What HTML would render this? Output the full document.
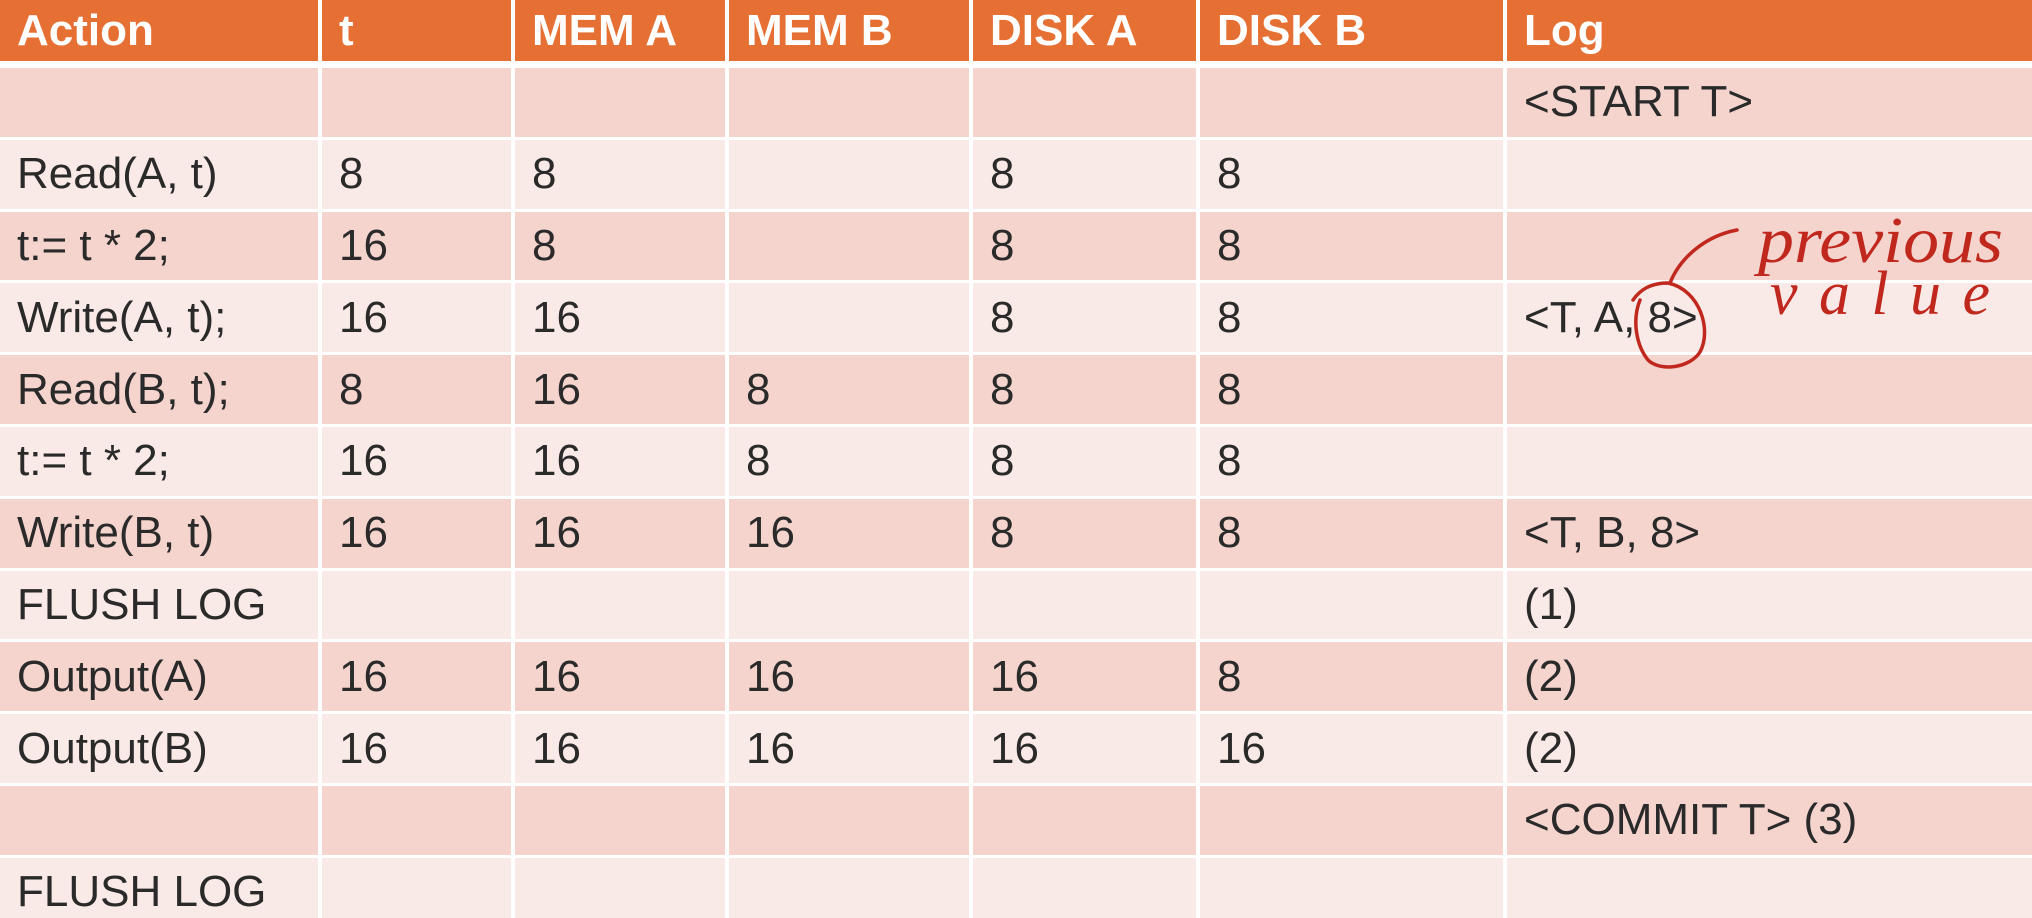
<!DOCTYPE html>
<html><head><meta charset="utf-8"><style>
html,body{margin:0;padding:0;width:2032px;height:918px;overflow:hidden;background:#fff;font-family:"Liberation Sans",Arial,sans-serif;position:relative;}
table{position:absolute;left:0;top:0;border-collapse:separate;border-spacing:0;table-layout:fixed;width:2032px;}
td{padding:0 0 0 17px;font-size:44px;color:#2a2a2a;white-space:nowrap;border-right:4px solid #fff;border-bottom:3.8px solid #fff;box-sizing:border-box;height:71.8px;vertical-align:middle;}
td:last-child{border-right:0;}
tr.h td{color:#fff;font-weight:bold;background:#E66F33;height:68px;border-bottom:7px solid #fff;}
tr.a td{background:#F5D4CE;}
tr.b td{background:#FAEAE7;}
</style></head><body>
<table>
<colgroup><col style="width:322px"><col style="width:193px"><col style="width:214px"><col style="width:244px"><col style="width:227px"><col style="width:307px"><col style="width:525px"></colgroup>
<tr class="h"><td>Action</td><td>t</td><td>MEM A</td><td>MEM B</td><td>DISK A</td><td>DISK B</td><td>Log</td></tr>
<tr class="a"><td></td><td></td><td></td><td></td><td></td><td></td><td>&lt;START T&gt;</td></tr>
<tr class="b"><td>Read(A, t)</td><td>8</td><td>8</td><td></td><td>8</td><td>8</td><td></td></tr>
<tr class="a"><td>t:= t * 2;</td><td>16</td><td>8</td><td></td><td>8</td><td>8</td><td></td></tr>
<tr class="b"><td>Write(A, t);</td><td>16</td><td>16</td><td></td><td>8</td><td>8</td><td>&lt;T, A, 8&gt;</td></tr>
<tr class="a"><td>Read(B, t);</td><td>8</td><td>16</td><td>8</td><td>8</td><td>8</td><td></td></tr>
<tr class="b"><td>t:= t * 2;</td><td>16</td><td>16</td><td>8</td><td>8</td><td>8</td><td></td></tr>
<tr class="a"><td>Write(B, t)</td><td>16</td><td>16</td><td>16</td><td>8</td><td>8</td><td>&lt;T, B, 8&gt;</td></tr>
<tr class="b"><td>FLUSH LOG</td><td></td><td></td><td></td><td></td><td></td><td>(1)</td></tr>
<tr class="a"><td>Output(A)</td><td>16</td><td>16</td><td>16</td><td>16</td><td>8</td><td>(2)</td></tr>
<tr class="b"><td>Output(B)</td><td>16</td><td>16</td><td>16</td><td>16</td><td>16</td><td>(2)</td></tr>
<tr class="a"><td></td><td></td><td></td><td></td><td></td><td></td><td>&lt;COMMIT T&gt; (3)</td></tr>
<tr class="b"><td>FLUSH LOG</td><td></td><td></td><td></td><td></td><td></td><td></td></tr>
</table>
<svg style="position:absolute;left:0;top:0" width="2032" height="918">
<g fill="none" stroke="#C0281E" stroke-width="3.5" stroke-linecap="round">
<path d="M1633 300 C1640 290 1650 283 1668 283 C1700 290 1712 330 1700 352 C1690 368 1660 372 1648 360 C1636 345 1632 320 1640 300"/>
<path d="M1670 283 C1680 258 1705 236 1737 230"/>
</g>
<text x="1758" y="262" font-family="'Liberation Serif',serif" font-style="italic" font-size="66" fill="#C0281E" textLength="245" lengthAdjust="spacingAndGlyphs">previous</text>
<text x="1770" y="314" font-family="'Liberation Serif',serif" font-style="italic" font-size="62" fill="#C0281E" textLength="220" lengthAdjust="spacing">value</text>
</svg>
</body></html>
